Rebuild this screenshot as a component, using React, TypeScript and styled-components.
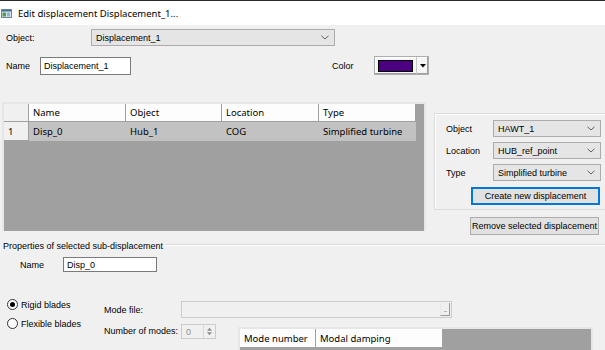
import React from "react";
import styled, { createGlobalStyle } from "styled-components";

const GlobalStyle = createGlobalStyle`
	body {
		margin: 0;
		background: #f0f0f0;
	}
`;

const uiFont = `"Liberation Sans", Arial, sans-serif`;
const gridFont = `"Noto Sans", "Open Sans", sans-serif`;

const Window = styled.div`
	width: 605px;
	height: 350px;
	overflow: hidden;
	background: #f0f0f0;
	font-family: ${uiFont};
	font-size: 9px;
	color: #000;
	display: flex;
	flex-direction: column;
`;

const TitleBar = styled.div`
	flex-shrink: 0;
	height: 24px;
	border-top: 1px solid #2b2b2b;
	background: #fff;
	display: flex;
	align-items: center;
	gap: 6px;
	padding-left: 1px;
	font-family: ${gridFont};
	font-size: 9.5px;
`;

const Body = styled.div`
	display: flex;
	flex-direction: column;
	padding-top: 4px;
`;

const Row = styled.div<{ $top?: number; $left?: number; $height: number }>`
	display: flex;
	align-items: center;
	flex-shrink: 0;
	height: ${(p) => p.$height}px;
	margin-top: ${(p) => p.$top || 0}px;
	padding-left: ${(p) => p.$left || 0}px;
`;

const Label = styled.span<{ $width: number; $gap?: number }>`
	display: inline-block;
	width: ${(p) => p.$width}px;
	margin-left: ${(p) => p.$gap || 0}px;
	flex-shrink: 0;
	white-space: nowrap;
`;

const Combo = styled.div<{ $width: number }>`
	box-sizing: border-box;
	width: ${(p) => p.$width}px;
	height: 17px;
	flex-shrink: 0;
	background: #e5e5e5;
	border: 1px solid #acacac;
	display: flex;
	align-items: center;
	justify-content: space-between;
	padding: 0 5px 0 4px;
`;

const TextInput = styled.div<{ $width: number; $height: number; $disabled?: boolean }>`
	box-sizing: border-box;
	width: ${(p) => p.$width}px;
	height: ${(p) => p.$height}px;
	flex-shrink: 0;
	background: ${(p) => (p.$disabled ? "#f0f0f0" : "#fff")};
	border: 1px solid ${(p) => (p.$disabled ? "#cccccc" : "#7a7a7a")};
	color: ${(p) => (p.$disabled ? "#8c8c8c" : "#000")};
	display: flex;
	align-items: center;
	padding-left: 3px;
	position: relative;
`;

const ColorButton = styled.div`
	box-sizing: border-box;
	width: 55px;
	height: 19px;
	background: #f5f5f5;
	border: 1px solid #adadad;
	box-shadow: inset -1px -1px 0 #a0a0a0, inset 1px 1px 0 #fff;
	display: flex;
	align-items: center;
	padding-left: 3px;
`;

const Swatch = styled.div<{ $color: string }>`
	box-sizing: border-box;
	width: 35px;
	height: 12px;
	background: ${(p) => p.$color};
	border: 1px solid #000;
`;

const SwatchArrow = styled.div`
	margin-left: 3px;
	height: 17px;
	flex: 1;
	border-left: 1px solid #c8c8c8;
	display: flex;
	align-items: center;
	justify-content: center;
`;

const MainSection = styled.div`
	display: flex;
	align-items: flex-start;
	margin-top: 27px;
	height: 133px;
	flex-shrink: 0;
`;

const TableFrame = styled.div<{ $width: number; $height: number; $left: number }>`
	box-sizing: border-box;
	width: ${(p) => p.$width}px;
	height: ${(p) => p.$height}px;
	margin-left: ${(p) => p.$left}px;
	flex-shrink: 0;
	border: 2px solid #e6e6e6;
	border-bottom: none;
	background: #a0a0a0;
	font-family: ${gridFont};
	font-size: 9.5px;
	overflow: hidden;
`;

const TableRow = styled.div<{ $height: number }>`
	display: flex;
	height: ${(p) => p.$height}px;
`;

const Cell = styled.div<{ $width: number; $kind: "header" | "corner" | "selected" }>`
	box-sizing: border-box;
	width: ${(p) => p.$width}px;
	flex-shrink: 0;
	display: flex;
	align-items: center;
	padding-left: 4px;
	white-space: nowrap;
	background: ${(p) =>
		p.$kind === "header" ? "#fdfdfd" : p.$kind === "corner" ? "#f0f0f0" : "#c2c2c2"};
	border-right: 1px solid ${(p) => (p.$kind === "selected" ? "#c2c2c2" : "#a0a0a0")};
	border-bottom: 1px solid ${(p) => (p.$kind === "selected" ? "#c2c2c2" : "#a0a0a0")};
`;

const SideColumn = styled.div`
	margin-left: 8px;
	margin-top: 11px;
	width: 175px;
	flex-shrink: 0;
	display: flex;
	flex-direction: column;
`;

const GroupBox = styled.div`
	box-sizing: border-box;
	height: 97px;
	border: 1px solid #dcdcdc;
	box-shadow: inset 1px 1px 0 #fff;
	padding: 6px 0 0 11px;
	display: grid;
	grid-template-columns: 47px 108px;
	grid-auto-rows: 17px;
	row-gap: 5px;
	align-items: center;
`;

const PushButton = styled.div<{ $focused?: boolean; $top?: number }>`
	box-sizing: border-box;
	width: 129px;
	height: 18px;
	margin-top: ${(p) => p.$top || 0}px;
	margin-left: 36px;
	background: #e1e1e1;
	border: 1px solid ${(p) => (p.$focused ? "#0078d7" : "#adadad")};
	box-shadow: ${(p) => (p.$focused ? "inset 0 0 0 1px #0078d7" : "none")};
	display: flex;
	align-items: center;
	justify-content: center;
	white-space: nowrap;
`;

const GroupButtonSlot = styled.div`
	grid-column: 1 / span 2;
	margin-top: 2px;
	margin-left: -11px;
`;

const SectionHeader = styled.div`
	display: flex;
	align-items: center;
	margin-top: 6px;
	height: 10px;
	padding-left: 3px;
	flex-shrink: 0;
`;

const HeaderLine = styled.div`
	flex: 1;
	margin-left: 2px;
	margin-top: -3px;
	border-top: 1px solid #dcdcdc;
	box-shadow: 0 1px 0 #fff;
`;

const OptionsSection = styled.div`
	display: flex;
	align-items: flex-start;
	margin-top: 26px;
	flex-shrink: 0;
`;

const RadioColumn = styled.div`
	width: 97px;
	padding-left: 7px;
	display: flex;
	flex-direction: column;
	gap: 6px;
	flex-shrink: 0;
`;

const RadioItem = styled.div`
	display: flex;
	align-items: center;
	gap: 3px;
	height: 13px;
	white-space: nowrap;
`;

const RadioCircle = styled.div<{ $checked?: boolean }>`
	box-sizing: border-box;
	width: 11px;
	height: 11px;
	border-radius: 50%;
	border: 1px solid #333;
	background: #fff;
	display: flex;
	align-items: center;
	justify-content: center;
	&::after {
		content: "";
		width: 5px;
		height: 5px;
		border-radius: 50%;
		background: ${(p) => (p.$checked ? "#000" : "transparent")};
	}
`;

const FieldsColumn = styled.div`
	flex: 1;
	display: flex;
	flex-direction: column;
	margin-top: 3px;
`;

const BrowseButton = styled.div`
	position: absolute;
	right: 1px;
	top: 1px;
	bottom: 1px;
	width: 10px;
	box-sizing: border-box;
	border-left: 1px solid #e8e8e8;
	border-right: 1px solid #9a9a9a;
	border-bottom: 1px solid #9a9a9a;
	background: #f0f0f0;
	color: #777;
	font-size: 7px;
	display: flex;
	align-items: center;
	justify-content: center;
	letter-spacing: -1px;
`;

const SpinBox = styled.div`
	box-sizing: border-box;
	width: 35px;
	height: 15px;
	flex-shrink: 0;
	background: #f0f0f0;
	border: 1px solid #cccccc;
	color: #8c8c8c;
	display: flex;
	align-items: center;
	justify-content: space-between;
	padding-left: 4px;
`;

const SpinArrows = styled.div`
	width: 11px;
	height: 13px;
	border-left: 1px solid #d8d8d8;
	display: flex;
	flex-direction: column;
	align-items: center;
	justify-content: space-evenly;
`;

const ModeRow = styled.div`
	display: flex;
	align-items: flex-start;
	margin-top: 6px;
`;

const ModeTableSlot = styled.div`
	flex-shrink: 0;
	width: 355px;
	margin-left: 22px;
	margin-top: 3px;
`;

const Chevron = () => (
	<svg width="8" height="5" viewBox="0 0 8 5">
		<path d="M0.5 0.8 L4 4 L7.5 0.8" fill="none" stroke="#606060" strokeWidth="1" />
	</svg>
);

const Triangle = ({ up, color = "#000", size = 5 }: { up?: boolean; color?: string; size?: number }) => (
	<svg width={size} height={Math.ceil(size / 2) + 1} viewBox="0 0 6 4">
		<path d={up ? "M0 4 L3 0.5 L6 4 Z" : "M0 0 L6 0 L3 3.5 Z"} fill={color} />
	</svg>
);

const WindowIcon = () => (
	<svg width="11" height="9" viewBox="0 0 11 9">
		<rect x="0.5" y="0.5" width="10" height="8" fill="#dfe8ee" stroke="#6f8596" />
		<rect x="1" y="1" width="9" height="1.5" fill="#3c6d8f" />
		<rect x="1.5" y="3.5" width="3.5" height="4" fill="#4e9a52" />
		<rect x="6" y="3.5" width="3" height="4" fill="#8bb3cf" />
	</svg>
);

const subColumns = [
	{ title: "Name", width: 97, value: "Disp_0" },
	{ title: "Object", width: 96, value: "Hub_1" },
	{ title: "Location", width: 97, value: "COG" },
	{ title: "Type", width: 97, value: "Simplified turbine" },
];

const sideFields = [
	{ label: "Object", value: "HAWT_1" },
	{ label: "Location", value: "HUB_ref_point" },
	{ label: "Type", value: "Simplified turbine" },
];

export default function App() {
	return (
		<Window>
			<GlobalStyle />
			<TitleBar>
				<WindowIcon />
				<span>Edit displacement Displacement_1...</span>
			</TitleBar>
			<Body>
				<Row $height={17} $left={6}>
					<Label $width={85}>Object:</Label>
					<Combo $width={244}>
						<span>Displacement_1</span>
						<Chevron />
					</Combo>
				</Row>
				<Row $height={19} $left={6} $top={10}>
					<Label $width={34}>Name</Label>
					<TextInput $width={91} $height={18}>
						Displacement_1
					</TextInput>
					<Label $width={42} $gap={201}>
						Color
					</Label>
					<ColorButton>
						<Swatch $color="#4b0082" />
						<SwatchArrow>
							<Triangle size={6} />
						</SwatchArrow>
					</ColorButton>
				</Row>

				<MainSection>
					<TableFrame $width={424} $height={129} $left={2}>
						<TableRow $height={18}>
							<Cell $width={25} $kind="corner" />
							{subColumns.map((c) => (
								<Cell key={c.title} $width={c.width} $kind="header">
									{c.title}
								</Cell>
							))}
						</TableRow>
						<TableRow $height={19}>
							<Cell $width={25} $kind="corner">
								1
							</Cell>
							{subColumns.map((c) => (
								<Cell key={c.title} $width={c.width} $kind="selected">
									{c.value}
								</Cell>
							))}
						</TableRow>
					</TableFrame>
					<SideColumn>
						<GroupBox>
							{sideFields.map((f) => (
								<React.Fragment key={f.label}>
									<span>{f.label}</span>
									<Combo $width={108}>
										<span>{f.value}</span>
										<Chevron />
									</Combo>
								</React.Fragment>
							))}
							<GroupButtonSlot>
								<PushButton $focused>Create new displacement</PushButton>
							</GroupButtonSlot>
						</GroupBox>
						<PushButton $top={7}>Remove selected displacement</PushButton>
					</SideColumn>
				</MainSection>

				<SectionHeader>
					<span>Properties of selected sub-displacement</span>
					<HeaderLine />
				</SectionHeader>
				<Row $height={15} $left={20} $top={6}>
					<Label $width={43}>Name</Label>
					<TextInput $width={94} $height={15}>
						Disp_0
					</TextInput>
				</Row>

				<OptionsSection>
					<RadioColumn>
						<RadioItem>
							<RadioCircle $checked />
							Rigid blades
						</RadioItem>
						<RadioItem>
							<RadioCircle />
							Flexible blades
						</RadioItem>
					</RadioColumn>
					<FieldsColumn>
						<Row $height={17}>
							<Label $width={77}>Mode file:</Label>
							<TextInput $width={271} $height={17} $disabled>
								<BrowseButton>...</BrowseButton>
							</TextInput>
						</Row>
						<ModeRow>
							<Label $width={77} style={{ lineHeight: "15px" }}>
								Number of modes:
							</Label>
							<SpinBox>
								<span>0</span>
								<SpinArrows>
									<Triangle up color="#8c8c8c" size={5} />
									<Triangle color="#8c8c8c" size={5} />
								</SpinArrows>
							</SpinBox>
							<ModeTableSlot>
								<TableFrame $width={355} $height={30} $left={0}>
									<TableRow $height={19}>
										<Cell $width={76} $kind="header">
											Mode number
										</Cell>
										<Cell $width={127} $kind="header">
											Modal damping
										</Cell>
									</TableRow>
								</TableFrame>
							</ModeTableSlot>
						</ModeRow>
					</FieldsColumn>
				</OptionsSection>
			</Body>
		</Window>
	);
}
